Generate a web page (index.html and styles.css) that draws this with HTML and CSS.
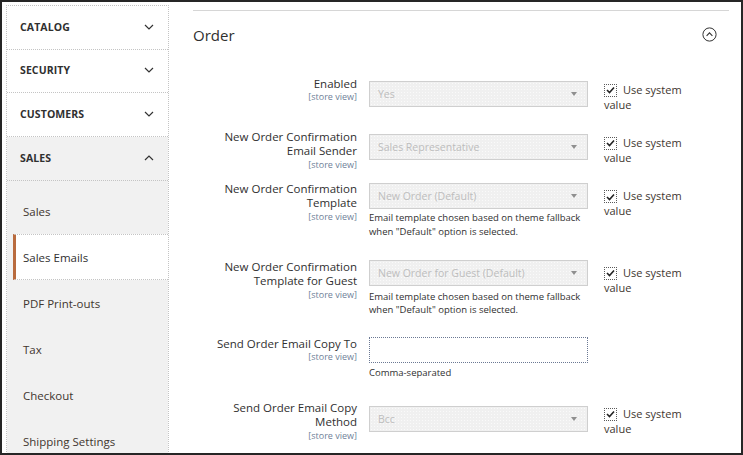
FILE: index.html
```html
<!DOCTYPE html>
<html>
<head>
<meta charset="utf-8">
<link rel="stylesheet" href="styles.css">
</head>
<body>
<div class="frame">
  <aside class="sidebar">
    <div class="sec">
      <div class="sec-title"><span>CATALOG</span>
        <svg class="chev" width="10" height="6" viewBox="0 0 10 6"><path d="M1 1 L5 5 L9 1" fill="none" stroke="#333" stroke-width="1.2"/></svg></div>
    </div>
    <div class="sec">
      <div class="sec-title"><span>SECURITY</span>
        <svg class="chev" width="10" height="6" viewBox="0 0 10 6"><path d="M1 1 L5 5 L9 1" fill="none" stroke="#333" stroke-width="1.2"/></svg></div>
    </div>
    <div class="sec">
      <div class="sec-title"><span>CUSTOMERS</span>
        <svg class="chev" width="10" height="6" viewBox="0 0 10 6"><path d="M1 1 L5 5 L9 1" fill="none" stroke="#333" stroke-width="1.2"/></svg></div>
    </div>
    <div class="sec sec--open">
      <div class="sec-title"><span>SALES</span>
        <svg class="chev" width="10" height="6" viewBox="0 0 10 6"><path d="M1 5 L5 1 L9 5" fill="none" stroke="#333" stroke-width="1.2"/></svg></div>
      <ul class="sub">
        <li>Sales</li>
        <li class="active">Sales Emails</li>
        <li>PDF Print-outs</li>
        <li>Tax</li>
        <li>Checkout</li>
        <li>Shipping Settings</li>
      </ul>
    </div>
  </aside>

  <main class="main">
    <div class="section-head">
      <h2>Order</h2>
      <svg class="collapse" width="15" height="15" viewBox="0 0 15 15"><circle cx="7.5" cy="7.5" r="6.6" fill="none" stroke="#333" stroke-width="1"/><path d="M4.6 8.8 L7.5 5.9 L10.4 8.8" fill="none" stroke="#333" stroke-width="1.1"/></svg>
    </div>

    <div class="form">
      <div class="row row-1">
        <div class="label"><span class="ltext">Enabled</span><span class="scope">[store view]</span></div>
        <div class="control">
          <div class="select"><span>Yes</span><i class="arrow"></i></div>
        </div>
        <label class="usesys"><span class="cb"><svg width="9" height="8" viewBox="0 0 9 8"><path d="M1 4 L3.5 6.5 L8 1.5" fill="none" stroke="#222" stroke-width="1.6"/></svg></span><span class="ustext">Use system value</span></label>
      </div>

      <div class="row row-2">
        <div class="label"><span class="ltext">New Order Confirmation Email Sender</span><span class="scope">[store view]</span></div>
        <div class="control">
          <div class="select"><span>Sales Representative</span><i class="arrow"></i></div>
        </div>
        <label class="usesys"><span class="cb"><svg width="9" height="8" viewBox="0 0 9 8"><path d="M1 4 L3.5 6.5 L8 1.5" fill="none" stroke="#222" stroke-width="1.6"/></svg></span><span class="ustext">Use system value</span></label>
      </div>

      <div class="row row-3">
        <div class="label"><span class="ltext">New Order Confirmation Template</span><span class="scope">[store view]</span></div>
        <div class="control">
          <div class="select"><span>New Order (Default)</span><i class="arrow"></i></div>
          <p class="note">Email template chosen based on theme fallback when "Default" option is selected.</p>
        </div>
        <label class="usesys"><span class="cb"><svg width="9" height="8" viewBox="0 0 9 8"><path d="M1 4 L3.5 6.5 L8 1.5" fill="none" stroke="#222" stroke-width="1.6"/></svg></span><span class="ustext">Use system value</span></label>
      </div>

      <div class="row row-4">
        <div class="label"><span class="ltext">New Order Confirmation Template for Guest</span><span class="scope">[store view]</span></div>
        <div class="control">
          <div class="select"><span>New Order for Guest (Default)</span><i class="arrow"></i></div>
          <p class="note">Email template chosen based on theme fallback when "Default" option is selected.</p>
        </div>
        <label class="usesys"><span class="cb"><svg width="9" height="8" viewBox="0 0 9 8"><path d="M1 4 L3.5 6.5 L8 1.5" fill="none" stroke="#222" stroke-width="1.6"/></svg></span><span class="ustext">Use system value</span></label>
      </div>

      <div class="row row-5">
        <div class="label"><span class="ltext">Send Order Email Copy To</span><span class="scope">[store view]</span></div>
        <div class="control">
          <div class="input"></div>
          <p class="note">Comma-separated</p>
        </div>
      </div>

      <div class="row row-6">
        <div class="label"><span class="ltext">Send Order Email Copy Method</span><span class="scope">[store view]</span></div>
        <div class="control">
          <div class="select"><span>Bcc</span><i class="arrow"></i></div>
        </div>
        <label class="usesys"><span class="cb"><svg width="9" height="8" viewBox="0 0 9 8"><path d="M1 4 L3.5 6.5 L8 1.5" fill="none" stroke="#222" stroke-width="1.6"/></svg></span><span class="ustext">Use system value</span></label>
      </div>
    </div>
  </main>
</div>
</body>
</html>
```

FILE: styles.css
```css
* { box-sizing: border-box; }
html, body { margin: 0; padding: 0; background: #fff; }
body { font-family: "Open Sans", "DejaVu Sans", sans-serif; color: #41362f; }

.frame {
  width: 743px;
  height: 455px;
  border: 2px solid #262626;
  display: flex;
  overflow: hidden;
  background: #fff;
}

/* Sidebar */
.sidebar {
  width: 163px;
  margin: 3px 0 0 4px;
  flex: none;
  border-top: 1px dotted #c4c4c4;
  border-left: 1px dotted #c4c4c4;
  border-right: 1px dotted #c4c4c4;
  align-self: flex-start;
}
.sec { border-bottom: 1px dotted #c4c4c4; }
.sec--open { background: #f1f1f1; border-bottom: none; }
.sec-title {
  height: 43px;
  display: flex;
  align-items: center;
  justify-content: space-between;
  padding: 0 14px 2px 13px;
  font-weight: 700;
  font-size: 10.5px;
  color: #303030;
  letter-spacing: 0.1px;
}
.sec:nth-child(2) .sec-title { height: 42px; }
.sec--open .sec-title { border-bottom: 1px dotted #c4c4c4; height: 44px; }
.chev { display: block; }

.sub { list-style: none; margin: 0; padding: 7px 0 0 6px; }
.sub li {
  height: 46px;
  display: flex;
  align-items: center;
  padding-left: 10px;
  font-size: 11.5px;
  color: #41362f;
}
.sub li.active {
  background: #fff;
  border-left: 3px solid #b96b3e;
  border-top: 1px dotted #c4c4c4;
  border-bottom: 1px dotted #c4c4c4;
  padding-left: 7px;
  color: #303030;
}

/* Main */
.main {
  flex: 1;
  padding: 8px 12px 0 24px;
}
.section-head {
  border-top: 1px solid #d6d6d6;
  height: 50px;
  display: flex;
  align-items: center;
  justify-content: space-between;
  padding: 0 12px 2px 0;
}
.section-head h2 {
  margin: 0;
  font-size: 15px;
  line-height: 20px;
  font-weight: 400;
  color: #303030;
}
.collapse { display: block; }

.form { padding-top: 16.5px; }
.row {
  display: flex;
  align-items: flex-start;
}
.label {
  width: 150px;
  margin-left: 14px;
  flex: none;
  text-align: right;
}
.ltext {
  display: block;
  font-size: 11.5px;
  line-height: 14.5px;
  color: #303030;
}
.scope {
  display: block;
  font-size: 9px;
  line-height: 11px;
  color: #6f7f99;
}
.control {
  width: 219px;
  flex: none;
  margin-left: 12px;
}

.select {
  height: 26px;
  border: 1px solid #cfcfcf;
  background-color: #f0f0f0;
  background-image: radial-gradient(circle, #fafafa 0.6px, transparent 0.8px);
  background-size: 3px 3px;
  display: flex;
  align-items: center;
  justify-content: space-between;
  padding: 0 10px 0 8px;
  font-size: 10.5px;
  color: #bdbdbd;
}
.arrow {
  width: 0; height: 0;
  border-left: 3.5px solid transparent;
  border-right: 3.5px solid transparent;
  border-top: 4px solid #8f8f8f;
}
.input {
  height: 26px;
  border: 1px dotted #6a7893;
  background: #fff;
}
.note {
  margin: 4px 0 0;
  font-size: 9.5px;
  line-height: 13.5px;
  color: #303030;
}

.usesys {
  margin-left: 16px;
  padding-top: 5px;
  display: block;
  width: 90px;
  font-size: 11px;
  line-height: 15px;
  color: #41362f;
}
.cb {
  display: inline-flex;
  align-items: center;
  justify-content: center;
  width: 13px;
  height: 13px;
  border: 1px dotted #5a5a5a;
  vertical-align: top;
  margin: 2px 6px 0 0;
}
.cb svg { display: block; }

/* per-row vertical rhythm */
.row-1 { height: 53px; }
.row-1 .control { padding-top: 4.5px; }
.row-2 { height: 52px; }
.row-2 .control { padding-top: 4.5px; }
.row-3 { height: 78px; }
.row-3 .control { padding-top: 1.5px; }
.row-3 .note { margin-top: 2px; }
.row-3 .usesys { padding-top: 6.5px; }
.row-4 { height: 77px; }
.row-5 { height: 64px; }
.row-5 .note { margin-top: 3.5px; }
.row-6 .control { padding-top: 5.5px; }
```
